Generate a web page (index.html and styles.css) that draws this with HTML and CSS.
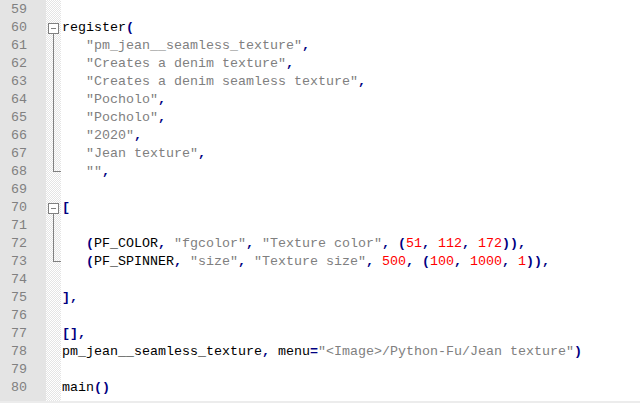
FILE: index.html
```html
<!DOCTYPE html>
<html>
<head>
<meta charset="utf-8">
<link rel="stylesheet" href="styles.css">
</head>
<body>
<div class="editor">
  <div class="gutter">
    <div class="ln">59</div><div class="ln">60</div><div class="ln">61</div><div class="ln">62</div>
    <div class="ln">63</div><div class="ln">64</div><div class="ln">65</div><div class="ln">66</div>
    <div class="ln">67</div><div class="ln">68</div><div class="ln">69</div><div class="ln">70</div>
    <div class="ln">71</div><div class="ln">72</div><div class="ln">73</div><div class="ln">74</div>
    <div class="ln">75</div><div class="ln">76</div><div class="ln">77</div><div class="ln">78</div>
    <div class="ln">79</div><div class="ln">80</div>
  </div>
  <div class="folds">
    <div class="fc"></div>
    <div class="fc start"><span class="box"></span></div>
    <div class="fc mid"></div><div class="fc mid"></div><div class="fc mid"></div><div class="fc mid"></div>
    <div class="fc mid"></div><div class="fc mid"></div><div class="fc mid"></div>
    <div class="fc end"></div>
    <div class="fc"></div>
    <div class="fc start"><span class="box"></span></div>
    <div class="fc mid"></div><div class="fc mid"></div>
    <div class="fc end"></div>
    <div class="fc"></div><div class="fc"></div><div class="fc"></div><div class="fc"></div>
    <div class="fc"></div><div class="fc"></div><div class="fc"></div>
  </div>
  <div class="code">
<div class="cl"></div>
<div class="cl">register<span class="op">(</span></div>
<div class="cl">   <span class="str">"pm_jean__seamless_texture"</span><span class="op">,</span></div>
<div class="cl">   <span class="str">"Creates a denim texture"</span><span class="op">,</span></div>
<div class="cl">   <span class="str">"Creates a denim seamless texture"</span><span class="op">,</span></div>
<div class="cl">   <span class="str">"Pocholo"</span><span class="op">,</span></div>
<div class="cl">   <span class="str">"Pocholo"</span><span class="op">,</span></div>
<div class="cl">   <span class="str">"2020"</span><span class="op">,</span></div>
<div class="cl">   <span class="str">"Jean texture"</span><span class="op">,</span></div>
<div class="cl">   <span class="str">""</span><span class="op">,</span></div>
<div class="cl"></div>
<div class="cl"><span class="op">[</span></div>
<div class="cl"></div>
<div class="cl">   <span class="op">(</span>PF_COLOR<span class="op">,</span> <span class="str">"fgcolor"</span><span class="op">,</span> <span class="str">"Texture color"</span><span class="op">,</span> <span class="op">(</span><span class="num">51</span><span class="op">,</span> <span class="num">112</span><span class="op">,</span> <span class="num">172</span><span class="op">)),</span></div>
<div class="cl">   <span class="op">(</span>PF_SPINNER<span class="op">,</span> <span class="str">"size"</span><span class="op">,</span> <span class="str">"Texture size"</span><span class="op">,</span> <span class="num">500</span><span class="op">,</span> <span class="op">(</span><span class="num">100</span><span class="op">,</span> <span class="num">1000</span><span class="op">,</span> <span class="num">1</span><span class="op">)),</span></div>
<div class="cl"></div>
<div class="cl"><span class="op">],</span></div>
<div class="cl"></div>
<div class="cl"><span class="op">[],</span></div>
<div class="cl">pm_jean__seamless_texture<span class="op">,</span> menu<span class="op">=</span><span class="str">"&lt;Image&gt;/Python-Fu/Jean texture"</span><span class="op">)</span></div>
<div class="cl"></div>
<div class="cl">main<span class="op">()</span></div>
  </div>
</div>
<div class="hbar"></div>
</body>
</html>
```
FILE: styles.css
```css
html, body {
  margin: 0;
  padding: 0;
  background: #ffffff;
}
body {
  width: 640px;
  height: 403px;
  overflow: hidden;
  font-family: "Liberation Mono", "Courier New", monospace;
  font-size: 13.333px;
}
.editor {
  display: flex;
  height: 401px;
}
.gutter {
  width: 46px;
  background: #e4e4e4;
  padding-top: 1px;
  box-sizing: border-box;
}
.ln {
  height: 18px;
  line-height: 18px;
  color: #808080;
  padding-left: 11px;
}
.folds {
  width: 15px;
  padding-top: 1px;
  box-sizing: border-box;
  background: repeating-conic-gradient(#e4e4e4 0 25%, #ffffff 0 50%) 0 0 / 2px 2px;
}
.fc {
  height: 18px;
  position: relative;
}
.fc.start .box {
  position: absolute;
  left: 2px;
  top: 4px;
  width: 9px;
  height: 9px;
  border: 1px solid #808080;
  background: #ffffff;
}
.fc.start .box::after {
  content: "";
  position: absolute;
  left: 2px;
  top: 4px;
  width: 5px;
  height: 1px;
  background: #808080;
}
.fc.start::after {
  content: "";
  position: absolute;
  left: 7px;
  top: 15px;
  width: 1px;
  height: 3px;
  background: #808080;
}
.fc.mid::after {
  content: "";
  position: absolute;
  left: 7px;
  top: 0;
  width: 1px;
  height: 18px;
  background: #808080;
}
.fc.end::before {
  content: "";
  position: absolute;
  left: 7px;
  top: 0;
  width: 1px;
  height: 9px;
  background: #808080;
}
.fc.end::after {
  content: "";
  position: absolute;
  left: 7px;
  top: 8px;
  width: 8px;
  height: 1px;
  background: #808080;
}
.code {
  flex: 1;
  padding-top: 1px;
  padding-left: 1px;
  color: #000000;
}
.cl {
  height: 18px;
  line-height: 18px;
  white-space: pre;
}
.op {
  color: #000080;
  font-weight: bold;
}
.str {
  color: #808080;
}
.num {
  color: #ff0000;
}
.hbar {
  height: 2px;
  background: #ececec;
}
```
